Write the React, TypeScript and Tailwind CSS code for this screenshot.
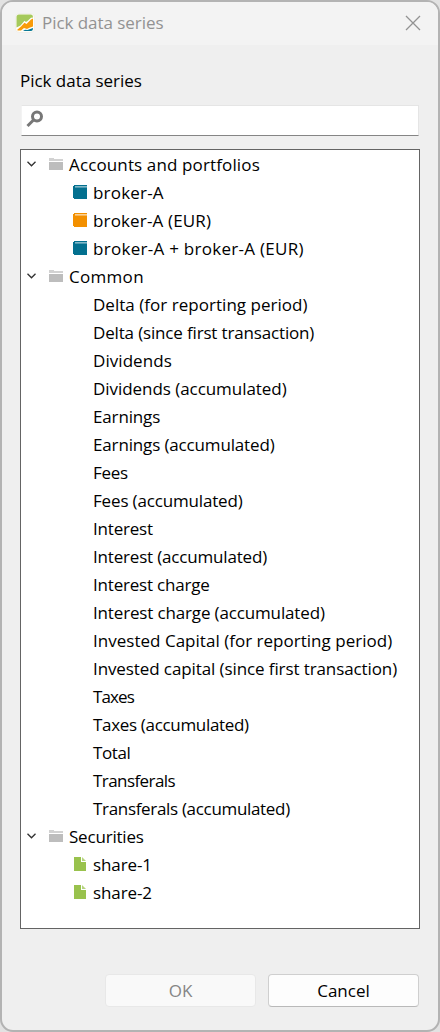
import React from "react";

type IconKind = "blue" | "orange" | "file" | "none";
type Item = { label: string; icon: IconKind; tracking?: string };
type Group = { label: string; tracking?: string; items: Item[] };

const groups: Group[] = [
  {
    label: "Accounts and portfolios",
    tracking: "tracking-[0.13px]",
    items: [
      { label: "broker-A", icon: "blue", tracking: "tracking-[0.2px]" },
      { label: "broker-A (EUR)", icon: "orange", tracking: "tracking-[0.15px]" },
      { label: "broker-A + broker-A (EUR)", icon: "blue", tracking: "tracking-[0.28px]" },
    ],
  },
  {
    label: "Common",
    tracking: "tracking-[0.3px]",
    items: [
      { label: "Delta (for reporting period)", icon: "none", tracking: "tracking-[0.03px]" },
      { label: "Delta (since first transaction)", icon: "none", tracking: "tracking-[-0.16px]" },
      { label: "Dividends", icon: "none", tracking: "tracking-[0.06px]" },
      { label: "Dividends (accumulated)", icon: "none", tracking: "tracking-[-0.05px]" },
      { label: "Earnings", icon: "none", tracking: "tracking-[-0.15px]" },
      { label: "Earnings (accumulated)", icon: "none", tracking: "tracking-[-0.15px]" },
      { label: "Fees", icon: "none", tracking: "tracking-[-0.25px]" },
      { label: "Fees (accumulated)", icon: "none", tracking: "tracking-[-0.16px]" },
      { label: "Interest", icon: "none", tracking: "tracking-[-0.2px]" },
      { label: "Interest (accumulated)", icon: "none", tracking: "tracking-[-0.18px]" },
      { label: "Interest charge", icon: "none", tracking: "tracking-[-0.2px]" },
      { label: "Interest charge (accumulated)", icon: "none", tracking: "tracking-[-0.15px]" },
      { label: "Invested Capital (for reporting period)", icon: "none", tracking: "tracking-[0.02px]" },
      { label: "Invested capital (since first transaction)", icon: "none", tracking: "tracking-[-0.1px]" },
      { label: "Taxes", icon: "none", tracking: "tracking-[-0.9px]" },
      { label: "Taxes (accumulated)", icon: "none", tracking: "tracking-[-0.32px]" },
      { label: "Total", icon: "none", tracking: "tracking-[-0.4px]" },
      { label: "Transferals", icon: "none", tracking: "tracking-[-0.57px]" },
      { label: "Transferals (accumulated)", icon: "none", tracking: "tracking-[-0.32px]" },
    ],
  },
  {
    label: "Securities",
    tracking: "tracking-[-0.2px]",
    items: [
      { label: "share-1", icon: "file", tracking: "tracking-[-0.1px]" },
      { label: "share-2", icon: "file", tracking: "tracking-[-0.1px]" },
    ],
  },
];

function AppLogo() {
  return (
    <svg width="20" height="20" viewBox="0 0 20 20" className="shrink-0">
      <rect x="0.5" y="0.5" width="19" height="19" rx="4" fill="#fffdf8" stroke="#e8e8e2" strokeWidth="0.6" />
      <path d="M4 1.500H16Q18 1.500 18 4V4.500L16 4.700L12.500 8L11 9L9.500 7.800L5.500 12.500L1.500 14.500V4Q1.500 1.500 4 1.500Z" fill="#a5c95b" />
      <path d="M2 17L6 13.500L9.500 9.800L11.500 11L16 6.500L18 5.500V13.500L15 14.500L12 16L9 15L6 17.500H3Z" fill="#f99b08" />
      <path d="M8 18L10 16.700L12.500 17L18 15Q18 18 16 18Z" fill="#087997" />
    </svg>
  );
}

function BookIcon({ color, stripe }: { color: string; stripe: string }) {
  return (
    <svg width="14" height="14" viewBox="0 0 14 14" shapeRendering="crispEdges">
      <path d="M1 0H14V14H1L0 13V1Z" fill={color} />
      <rect x="2" y="1" width="12" height="1" fill={stripe} />
      <rect x="2" y="2" width="12" height="1" fill={stripe} opacity="0.6" />
    </svg>
  );
}

function ItemIcon({ kind }: { kind: IconKind }) {
  if (kind === "blue") return <BookIcon color="#03708f" stripe="#82b8c8" />;
  if (kind === "orange") return <BookIcon color="#f39000" stripe="#fad195" />;
  if (kind === "file")
    return (
      <svg width="14" height="14" viewBox="0 0 14 14">
        <path d="M1 0H8V5H13V14H1Z" fill="#99c24d" />
        <path d="M9 0L13 4H9Z" fill="#b5d47e" />
      </svg>
    );
  return null;
}

function GroupRow({ label, tracking = "" }: { label: string; tracking?: string }) {
  return (
    <div className="flex h-7 items-center pl-[6px]">
      <svg width="10" height="10" viewBox="0 0 10 10" className="mb-[2px]">
        <path d="M0.500 2.800L4.500 6.800L8.500 2.800" fill="none" stroke="#303030" strokeWidth="1.300" />
      </svg>
      <svg width="14" height="12" viewBox="0 0 14 12" shapeRendering="crispEdges" className="mb-[2px] ml-3">
        <path d="M0 0H5V1H14V3H0Z" fill="#d2d2d2" />
        <rect y="4" width="14" height="8" fill="#bdbdbd" />
      </svg>
      <span className={`ml-[6px] whitespace-nowrap ${tracking}`}>{label}</span>
    </div>
  );
}

export default function App() {
  return (
    <div className="h-[1032px] w-[440px] bg-[#e2e2e2] font-['Open_Sans','Noto_Sans',sans-serif] text-[17px] leading-7 text-black">
      <div className="flex h-full flex-col overflow-hidden rounded-[13px] border-2 border-[#b3b3b3] bg-[#efefef]">
        <header className="flex h-[43px] shrink-0 items-center bg-[#f3f3f3] pr-[17px] pb-[2px] pl-[13px] text-[#929292]">
          <AppLogo />
          <span className="ml-[7px] tracking-[-0.05px]">Pick data series</span>
          <button className="ml-auto" aria-label="Close">
            <svg width="16" height="16" viewBox="0 0 16 16">
              <path d="M1 1L15 15M15 1L1 15" stroke="#929292" strokeWidth="1.300" />
            </svg>
          </button>
        </header>
        <main className="flex flex-1 flex-col pr-[18px] pl-[18px]">
          <h1 className="mt-[22px] h-7 tracking-[-0.03px]">Pick data series</h1>
          <div className="mt-[10px] mr-px ml-px flex h-[31px] shrink-0 items-center border border-t-[#e5e5e5] border-r-[#e5e5e5] border-b-[#858585] border-l-[#f3f3f3] bg-white pl-[4px]">
            <svg width="18" height="18" viewBox="0 0 18 18" className="mb-[3px]">
              <circle cx="11" cy="6.500" r="4.500" fill="none" stroke="#777" strokeWidth="3" />
              <path d="M7.500 10L1.500 16" stroke="#777" strokeWidth="3" />
            </svg>
          </div>
          <div className="mt-[13px] h-[780px] shrink-0 border border-[#646464] bg-white pt-px">
            {groups.map((group) => (
              <section key={group.label}>
                <GroupRow label={group.label} tracking={group.tracking} />
                {group.items.map((item) => (
                  <div key={item.label} className="flex h-7 items-center pl-[52px]">
                    <span className="mb-[2px] w-5">
                      <ItemIcon kind={item.icon} />
                    </span>
                    <span className={`whitespace-nowrap ${item.tracking ?? ""}`}>{item.label}</span>
                  </div>
                ))}
              </section>
            ))}
          </div>
          <footer className="mt-[45px] mr-px flex justify-end gap-3">
            <button className="h-[33px] w-[151px] rounded border border-[#e8e8e8] bg-[#f9f9f9] text-[#858585]">OK</button>
            <button className="h-[33px] w-[151px] rounded border border-[#cfcfcf] border-b-[#b9b9b9] bg-[#fdfdfd]">Cancel</button>
          </footer>
        </main>
      </div>
    </div>
  );
}
